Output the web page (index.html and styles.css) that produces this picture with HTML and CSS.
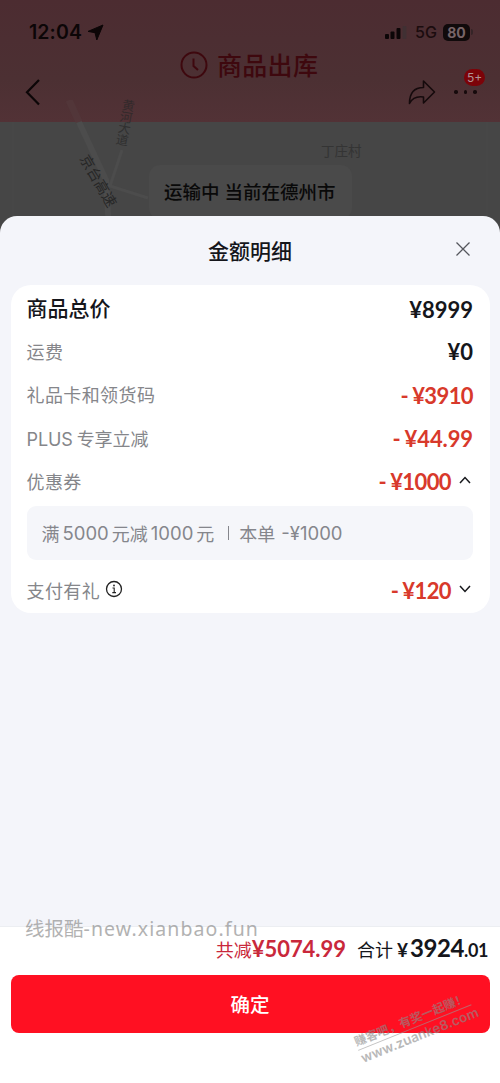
FILE: index.html
```html
<!DOCTYPE html>
<html lang="zh-CN">
<head>
<meta charset="utf-8">
<title>金额明细</title>
<link rel="stylesheet" href="styles.css">
</head>
<body>
<div class="screen">
  <div class="page">
    <header class="top">
      <div class="status">
        <span class="clock">12:04</span>
        <svg class="loc" width="17" height="17" viewBox="0 0 17 17"><path d="M16 1 1 7.400l7 1.300L9.800 16z" fill="#0c0506" stroke="#0c0506" stroke-linejoin="round"/></svg>
        <svg class="signal" width="23" height="13" viewBox="0 0 23 13"><rect x="0" y="8" width="4" height="5" rx="1"/><rect x="5.500" y="5.500" width="4" height="7.500" rx="1"/><rect x="11.500" y="2" width="4" height="11" rx="1"/><rect x="17.500" y="0" width="4" height="13" rx="1" fill="#403033"/></svg>
        <span class="net">5G</span>
        <span class="battery">80</span><i class="cap"></i>
      </div>
      <div class="stage">
        <svg width="28" height="28" viewBox="0 0 28 28" fill="none" stroke="#3e080e" stroke-width="2"><circle cx="14" cy="14" r="12.500"/><path d="M13.500 7.500v7.500l4.500 4"/></svg>
        <span>商品出库</span>
      </div>
      <div class="nav">
        <svg width="17" height="28" viewBox="0 0 17 28" fill="none" stroke="#0c0607" stroke-width="2.200"><path d="M15 2 3 14.300 15 26.500"/></svg>
        <svg class="share" width="28" height="26" viewBox="0 0 28 26" fill="none" stroke="#150a0c" stroke-width="1.600" stroke-linejoin="round"><path d="M15.500 2 26.500 13 15.500 24V18C8.500 17 4 19.500 1.500 24.500 1.500 14 6.500 8.500 15.500 8.500z"/></svg>
        <div class="more"><i></i><i></i><i></i><b class="badge">5+</b></div>
      </div>
    </header>
    <div class="map">
      <svg class="roads" width="500" height="130" viewBox="0 0 500 130" fill="none" stroke="#505050"><path d="M69 0 79 22" stroke="#543a3d" stroke-width="7"/><path d="M79 22 106 80 109 130" stroke-width="6"/><path d="M122 50 110 86 148 98" stroke-width="3"/><path d="M13 22V130M487 22V130" stroke-width="1" opacity=".45"/></svg>
      <span class="label huanghe">黄河大道</span>
      <span class="label jingtai">京台高速</span>
      <span class="label village">丁庄村</span>
      <div class="where">运输中 当前在德州市</div>
    </div>
  </div>

  <section class="sheet">
    <div class="title">
      <h1>金额明细</h1>
      <svg class="close" width="16" height="16" viewBox="0 0 16 16" stroke="#55575d" stroke-width="1.300"><path d="M1.500 1.500 14.500 14.500M14.500 1.500 1.500 14.500"/></svg>
    </div>
    <div class="card">
      <div class="row total"><span>商品总价</span><b>¥8999</b></div>
      <div class="row"><span>运费</span><b>¥0</b></div>
      <div class="row cut"><span>礼品卡和领货码</span><b class="tight"><i>-</i>¥3910</b></div>
      <div class="row cut"><span class="plus">PLUS<em></em>专享立减</span><b class="cents"><i>-</i>¥44.99</b></div>
      <div class="row cut"><span>优惠券</span><b class="tight"><i>-</i>¥1000</b><svg class="chev" width="12" height="8" viewBox="0 0 12 8"><path d="M1 7 6 1.500 11 7"/></svg></div>
      <div class="coupon"><span>满</span><span class="num c1">5000</span><span>元减</span><span class="num c2">1000</span><span>元</span><i class="bar"></i><span>本单</span><span class="num c3">-¥1000</span></div>
      <div class="row cut gift"><span>支付有礼</span><svg class="info" width="18" height="18" viewBox="0 0 18 18"><circle cx="9" cy="9" r="7.500" fill="none" stroke="#222" stroke-width="1.300"/><circle cx="9" cy="5.500" r=".9" fill="#222"/><path d="M7.500 8H9.200V12.500M7.300 12.600H11" fill="none" stroke="#222" stroke-width="1.100"/></svg><b class="tight"><i>-</i>¥120</b><svg class="chev" width="12" height="8" viewBox="0 0 12 8"><path d="M1 1 6 6.500 11 1"/></svg></div>
    </div>
    <footer class="foot">
      <div class="sum">
        <span class="off">共减<b>¥5074.99</b></span>
        <span class="pay">合计<b class="yen">¥</b><b class="int">3924</b><b class="dec">.01</b></span>
      </div>
      <div class="ok">确定</div>
    </footer>
  </section>
  <div class="mark site">线报酷<span>-new.xianbao.fun</span></div>
  <div class="mark stamp"><span>赚客吧，有奖一起赚！</span><span class="url">www.zuanke8.com</span></div>
</div>
</body>
</html>
```
FILE: styles.css
```css
* { box-sizing: border-box; }
body { margin: 0; }
i, em { font-style: normal; }
.screen {
  position: relative;
  width: 500px;
  height: 1083px;
  overflow: hidden;
  display: flex;
  flex-direction: column;
  background: #464646;
  font-family: Inter, "Noto Sans CJK SC", sans-serif;
  white-space: nowrap;
}
.page { height: 216px; flex: none; }
.top {
  height: 122px;
  padding-top: 21px;
  background: linear-gradient(#4c2c31, #4c3033 65%, #523236);
}
.status { height: 22px; display: flex; align-items: center; padding: 0 27px 0 29px; color: #0c0607; }
.clock { font-size: 19.500px; font-weight: 600; letter-spacing: .1px; width: 58px; }
.signal { margin-left: auto; fill: #0c0607; }
.net { font-size: 16px; font-weight: 500; margin-left: 7px; width: 28px; color: #1b0c0e; }
.battery {
  width: 27px; height: 17px; border-radius: 5px;
  background: #100a0b; color: #776467;
  font-size: 14px; line-height: 17px; font-weight: 700; text-align: center;
}
.cap { width: 2px; height: 6px; margin-left: 1px; border-radius: 0 2px 2px 0; background: #352427; }
.stage {
  height: 30px; margin-top: 7px;
  display: flex; align-items: center; gap: 9px; padding-left: 180px;
  color: #3e080e; font-size: 25px; font-weight: 500; line-height: 30px; letter-spacing: .3px;
}
.stage span { padding-top: 1px; }
.nav { height: 28px; margin-top: -2px; display: flex; align-items: center; padding: 0 22px 0 24px; }
.share { margin-left: auto; }
.more { position: relative; width: 24px; margin-left: 18px; display: flex; gap: 6px; }
.more i { width: 3.500px; height: 3.500px; border-radius: 50%; background: #160a0c; }
.badge {
  position: absolute; left: 10px; top: -21px;
  width: 21px; height: 17px; border-radius: 9px;
  background: #7c0309; color: #b09396;
  font-size: 12px; line-height: 17px; font-weight: 400; text-align: center;
}
.map { position: relative; height: 94px; padding: 43px 0 0 149px; }
.roads { position: absolute; left: 0; top: -22px; opacity: .6; }
.label { position: absolute; color: #272727; font-size: 13.500px; line-height: 14px; }
.huanghe { left: 119px; top: -22px; width: 14px; white-space: normal; font-size: 12.500px; line-height: 11.700px; transform: rotate(10deg); opacity: .7; }
.jingtai { left: 69px; top: 52px; transform: rotate(60deg); font-size: 14.500px; }
.village { left: 321px; top: 22px; color: #303030; opacity: .8; }
.where {
  position: relative;
  width: 203px; height: 54px; border-radius: 11px; padding-left: 15px;
  background: #4a4a4a; color: #090909;
  font-size: 18.500px; font-weight: 500; line-height: 55px;
}
.sheet {
  position: relative;
  flex: 1; display: flex; flex-direction: column;
  border-radius: 17px 17px 0 0; background: #f4f5fa; overflow: hidden; color: #15161b;
}
.title { position: relative; height: 69px; flex: none; display: flex; justify-content: center; }
.title h1 { margin: 0; font-size: 21px; font-weight: 500; line-height: 71px; }
.close { position: absolute; right: 29px; top: 25px; }
.card { width: 479px; height: 328px; flex: none; margin-left: 11px; padding: 2px 17px 0 15.500px; border-radius: 20px; background: #fff; }
.row { height: 43.200px; display: flex; align-items: center; font-size: 18px; color: #85868a; }
.row span { letter-spacing: .4px; margin-top: -1px; }
.row .plus { letter-spacing: -.1px; }
.row b {
  margin-left: auto; color: #15161b;
  font-family: Lato, "Noto Sans CJK SC", sans-serif; font-size: 22px;
}
.row b i { margin-right: 4px; }
.row.total span { color: #15161b; font-size: 21px; font-weight: 500; letter-spacing: 0; margin-top: -3px; }
.row.total b, .row.cut b { padding-top: 1px; }
.row.cut b { color: #d8392b; }
.row .tight { letter-spacing: -.6px; }
.row .cents { font-size: 22px; letter-spacing: -.1px; }
.row em { margin-left: 4px; }
.chev { margin: -2px 2px 0 8px; fill: none; stroke: #17181c; stroke-width: 1.500; }
.coupon {
  height: 54px; margin-top: 3px; padding-left: 15px; border-radius: 9px;
  display: flex; align-items: center; background: #f5f6fa; color: #85868c; font-size: 18px;
}
.num { font-size: 18.500px; }
.c1 { margin: 0 3px; }
.c2 { margin: 0 3px; }
.bar { width: 1px; height: 14px; margin: 0 10px 0 14px; background: #85868c; }
.c3 { margin-left: 6px; }
.gift { margin-top: 8px; }
.gift span { margin-top: 0; }
.info { margin: -2px 0 0 5px; }
.foot { height: 157px; margin-top: auto; background: #fff; border-top: 1px solid #eceef2; }
.sum { height: 48px; display: flex; justify-content: flex-end; align-items: baseline; padding: 0 12px 0 0; line-height: 41px; font-size: 18px; }
.sum b { font-family: Lato, sans-serif; }
.off { color: #c9283b; margin-right: 11px; }
.off b { font-size: 22px; letter-spacing: -.05px; }
.pay .yen { font-size: 19px; margin: 0 2px 0 4px; }
.pay .int { font-size: 24px; letter-spacing: -.4px; }
.pay .dec { font-size: 18px; letter-spacing: -.4px; }
.ok {
  width: 479px; height: 58px; margin-left: 10.500px; border-radius: 8px;
  background: #ff1022; color: #fff; text-align: center; font-size: 19.500px; font-weight: 500; line-height: 60px;
}
.mark { position: absolute; color: #8a8a8a; }
.site { left: 25px; top: 916px; font-family: "Noto Sans", "Noto Sans CJK SC", sans-serif; font-size: 19.500px; line-height: 26px; opacity: .65; }
.site span { letter-spacing: 1.1px; }
.stamp {
  left: 354px; top: 1010px; width: 122px; height: 36px;
  display: flex; flex-direction: column; transform: rotate(-22deg);
  font-size: 12px; line-height: 17px; font-weight: 700; opacity: .6;
}
.url { font-size: 13.500px; border-top: 1px solid #999; font-weight: 600; }
```
